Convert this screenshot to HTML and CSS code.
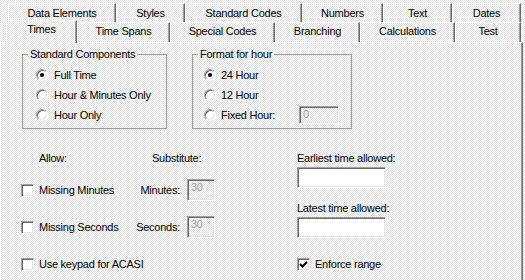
FILE: index.html
```html
<!DOCTYPE html>
<html lang="en">
<head>
  <meta charset="UTF-8">
  <title>Times</title>
  <link rel="stylesheet" href="styles.css">
</head>
<body>
  <div class="window">

    <!-- back row of tabs -->
    <div class="tab-row back">
      <div class="tab">Data Elements</div>
      <div class="tab">Styles</div>
      <div class="tab">Standard Codes</div>
      <div class="tab">Numbers</div>
      <div class="tab">Text</div>
      <div class="tab">Dates</div>
    </div>

    <!-- front row of tabs -->
    <div class="tab-row front">
      <div class="tab selected">Times</div>
      <div class="tab">Time Spans</div>
      <div class="tab">Special Codes</div>
      <div class="tab">Branching</div>
      <div class="tab">Calculations</div>
      <div class="tab">Test</div>
    </div>

    <div class="panel">
      <div class="groups">
        <fieldset class="group group-std">
          <legend>Standard Components</legend>
          <div class="options">
            <div class="option"><span class="radio on"></span>Full Time</div>
            <div class="option"><span class="radio"></span>Hour &amp; Minutes Only</div>
            <div class="option"><span class="radio"></span>Hour Only</div>
          </div>
        </fieldset>

        <fieldset class="group group-fmt">
          <legend>Format for hour</legend>
          <div class="options">
            <div class="option"><span class="radio on"></span>24 Hour</div>
            <div class="option"><span class="radio"></span>12 Hour</div>
            <div class="option"><span class="radio"></span>Fixed Hour:<span class="field disabled fixed">0</span></div>
          </div>
        </fieldset>
      </div>

      <div class="lower">
        <div class="lower-left">
          <div class="head"><span class="allow">Allow:</span><span>Substitute:</span></div>

          <div class="check-row r1">
            <div class="opt"><span class="checkbox"></span>Missing Minutes</div>
            <span class="sub">Minutes:</span>
            <span class="field disabled small-field">30</span>
          </div>

          <div class="check-row r2">
            <div class="opt"><span class="checkbox"></span>Missing Seconds</div>
            <span class="sub">Seconds:</span>
            <span class="field disabled small-field">30</span>
          </div>

          <div class="check-row r3">
            <div class="opt wide"><span class="checkbox"></span>Use keypad for ACASI</div>
          </div>
        </div>

        <div class="lower-right">
          <span>Earliest time allowed:</span>
          <span class="field time-field"></span>
          <span class="latest">Latest time allowed:</span>
          <span class="field time-field"></span>
          <div class="opt enforce">
            <span class="checkbox">
              <svg width="9" height="9" viewBox="0 0 9 9"><polyline points="1,4 3.5,6.5 8,2" fill="none" stroke="#000" stroke-width="2"/></svg>
            </span>Enforce range
          </div>
        </div>
      </div>
    </div>
  </div>
</body>
</html>
```

FILE: styles.css
```css
/* base */
* { margin: 0; padding: 0; box-sizing: border-box; }
html, body { height: 100%; }
body {
  font-family: "Liberation Sans", Arial, sans-serif;
  font-size: 11px;
  letter-spacing: -0.25px;
  line-height: 13px;
  color: #000;
  background: repeating-conic-gradient(#fff 0 25%, #e2e2e2 0 50%) 0 0 / 2px 2px;
  overflow: hidden;
}

.window { width: 523px; }

/* tabs */
.tab-row { display: flex; align-items: flex-start; height: 20px; }
.tab-row.back { margin-top: 3px; height: 19px; padding-left: 8px; }
.tab-row.front { padding-left: 6px; }

.tab {
  height: 100%;
  border-top: 1px solid #fff;
  border-left: 1px solid #fff;
  border-right: 1px solid #696969;
  box-shadow: inset -1px 0 #a0a0a0;
  text-align: center;
  white-space: nowrap;
  padding-top: 2px;
}
.back .tab { padding-top: 3px; }

.back .tab:nth-child(1) { width: 108px; }
.back .tab:nth-child(2) { width: 69px; }
.back .tab:nth-child(3) { width: 117px; }
.back .tab:nth-child(4) { width: 81px; }
.back .tab:nth-child(5) { width: 69px; }
.back .tab:nth-child(6) { width: 69px; }

.front .tab:nth-child(1) { width: 71px; }
.front .tab:nth-child(2) { width: 93px; }
.front .tab:nth-child(3) { width: 105px; }
.front .tab:nth-child(4) { width: 85px; }
.front .tab:nth-child(5) { width: 95px; }
.front .tab:nth-child(6) { width: 66px; }

.tab.selected {
  height: 23px;
  margin-top: -2px;
  position: relative;
  z-index: 1;
  background: repeating-conic-gradient(#fff 0 25%, #e2e2e2 0 50%) 0 0 / 2px 2px;
}

/* panel */
.panel {
  height: 240px;
  border-top: 1px solid #fff;
  border-left: 1px solid #fff;
  border-right: 1px solid #696969;
  box-shadow: inset -1px 0 #a0a0a0;
}

/* group boxes */
.groups { display: flex; gap: 25px; padding-left: 21px; margin-top: 5px; }
.group { border: 1px solid #a0a0a0; min-width: 0; }
.group-std { width: 145px; }
.group-fmt { width: 160px; }
.group legend { margin-left: 5px; padding: 0 2px; }

.options { padding: 4px 0 3px 13px; }
.group-fmt .options { padding-left: 11px; padding-right: 12px; }
.option { display: flex; align-items: center; height: 20px; gap: 6px; white-space: nowrap; }
.group-fmt .option { gap: 5px; }

.radio {
  flex: none;
  width: 12px;
  height: 12px;
  border-radius: 50%;
  border: 1px solid;
  border-color: #a0a0a0 #fff #fff #a0a0a0;
  box-shadow: inset 1px 1px #696969, inset -1px -1px #e3e3e3;
  background: #fff;
  display: flex;
  align-items: center;
  justify-content: center;
}
.radio.on::after {
  content: "";
  width: 4px;
  height: 4px;
  border-radius: 50%;
  background: #000;
}

/* text boxes */
.field {
  display: block;
  flex: none;
  border: 1px solid;
  border-color: #a0a0a0 #fff #fff #a0a0a0;
  box-shadow: inset 1px 1px #696969, inset -1px -1px #e3e3e3;
  background: #fff;
}
.field.disabled {
  background: transparent;
  color: #a0a0a0;
  padding: 1px 0 0 3px;
}
.fixed { width: 40px; height: 18px; margin-left: auto; }
.small-field { width: 28px; height: 22px; margin-left: 7px; }
.time-field { width: 89px; height: 21px; margin-top: 2px; }

/* lower part */
.lower { display: flex; margin-top: 23px; padding-left: 20px; }
.lower-left { width: 276px; }
.lower-right { display: flex; flex-direction: column; align-items: flex-start; }

.head { display: flex; height: 13px; padding-left: 18px; }
.allow { width: 113px; }

.check-row { display: flex; align-items: center; height: 22px; }
.check-row.r1 { margin-top: 14px; }
.check-row.r2 { margin-top: 15px; }
.check-row.r3 { margin-top: 20px; height: 13px; }

.opt { display: flex; align-items: center; gap: 5px; width: 114px; height: 13px; white-space: nowrap; }
.opt.wide { width: auto; }
.sub { width: 45px; text-align: right; }

.checkbox {
  flex: none;
  width: 13px;
  height: 13px;
  border: 1px solid;
  border-color: #a0a0a0 #fff #fff #a0a0a0;
  box-shadow: inset 1px 1px #696969, inset -1px -1px #e3e3e3;
  background: #fff;
  display: flex;
  align-items: center;
  justify-content: center;
}

.latest { margin-top: 14px; }
.enforce { margin-top: 20px; width: auto; }
```
